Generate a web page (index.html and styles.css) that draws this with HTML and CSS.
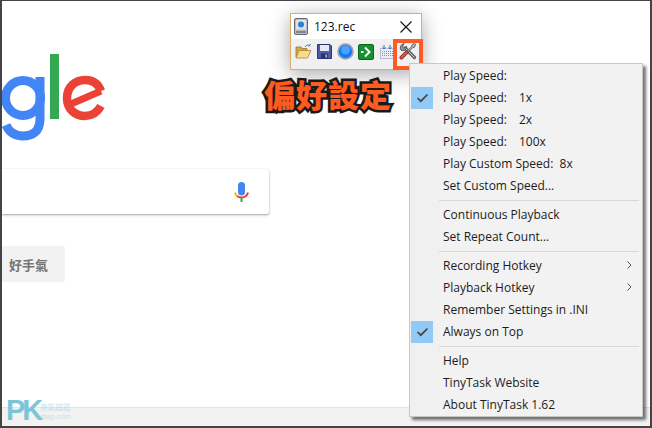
FILE: index.html
```html
<!DOCTYPE html>
<html lang="zh-Hant">
<head>
<meta charset="utf-8">
<title>TinyTask</title>
<link rel="stylesheet" href="styles.css">
</head>
<body>
<div class="screen">
  <main class="page">
    <svg class="logo" width="110" height="90" viewBox="0 0 110 90" fill="none" aria-label="Google">
      <circle cx="23" cy="44" r="17.500" stroke="#4285f4" stroke-width="9"/>
      <path d="M40 23V65C40 78 32 82 23 82C15 82 9 78 6 71" stroke="#4285f4" stroke-width="9"/>
      <rect x="50" y="0" width="9" height="65" fill="#34a853"/>
      <path d="M101 37C98 29 92 26 85 26C75 26 67 33 67 44C67 55 75 62 85 62C92 62 97 59 101 52" stroke="#ea4335" stroke-width="8.500"/>
      <path d="M71 50L101 37" stroke="#ea4335" stroke-width="7"/>
    </svg>
    <div class="search">
      <svg class="mic" width="15" height="20" viewBox="0 0 15 20" fill="none">
        <rect x="4" y="0" width="7" height="13.500" rx="3.500" fill="#4285f4"/>
        <path d="M1 10.500C1.300 12 2 13 3 14" stroke="#fbbc05" stroke-width="2"/>
        <path d="M3 14C5.500 16 9.500 16 12 14C13 13 13.700 12 14 10.500" stroke="#ea4335" stroke-width="2"/>
        <rect x="6.500" y="16" width="2" height="4" fill="#34a853"/>
      </svg>
    </div>
    <div class="lucky">好手氣</div>
    <footer class="page-foot"></footer>
  </main>

  <div class="watermark">
    <span class="wm-pk">PK</span>
    <span class="wm-small"><span>痞凱踏踏</span><span>step.com</span></span>
  </div>

  <section class="tool-window">
    <header class="tool-title">
      <svg width="14" height="17" viewBox="0 0 14 17">
        <rect x="0.500" y="0.500" width="13" height="16" rx="1.500" fill="#b9bfc6" stroke="#667"/>
        <rect x="2" y="2" width="10" height="9.500" fill="#dfe3e8"/>
        <circle cx="7" cy="6.500" r="3" fill="#2f7fd8"/>
        <rect x="2" y="13" width="10" height="2" fill="#80858c"/>
      </svg>
      <span class="tool-name">123.rec</span>
      <svg class="tool-close" width="12" height="12" viewBox="0 0 12 12">
        <path d="M0.500 0.500L11.500 11.500M11.500 0.500L0.500 11.500" stroke="#111" stroke-width="1.100"/>
      </svg>
    </header>
    <div class="tool-icons">
      <svg width="17" height="15" viewBox="0 0 17 15">
        <path d="M1 3H6L7 4.500H12V13H1Z" fill="#d8a742" stroke="#9a7428" stroke-width="0.800"/>
        <path d="M1 14L4 6.500H16L12.500 14Z" fill="#f6dc8c" stroke="#a8842f" stroke-width="0.800"/>
        <path d="M10 3C11 1 13 0.500 15 1.500M15 1.500L15 0M15 1.500L13.500 2.500" stroke="#5a7fb0" fill="none"/>
      </svg>
      <svg width="15" height="15" viewBox="0 0 15 15">
        <path d="M0.500 0.500H13L14.500 2V14.500H0.500Z" fill="#4c5bb0" stroke="#2c3478"/>
        <rect x="3" y="1" width="9" height="6" fill="#e6e8f2"/>
        <rect x="4" y="9.500" width="7" height="5" fill="#2e3560"/>
        <rect x="8.500" y="10.500" width="1.500" height="3" fill="#b8bdd0"/>
      </svg>
      <svg width="17" height="17" viewBox="0 0 17 17">
        <circle cx="8.500" cy="8.500" r="7.400" fill="#1276f2" stroke="#98a2b0" stroke-width="1.800"/>
        <circle cx="8.500" cy="7" r="4.500" fill="#4aa2fb"/>
      </svg>
      <svg class="go" width="16" height="16" viewBox="0 0 16 16">
        <rect x="0.500" y="0.500" width="15" height="15" rx="1.500" fill="#15912f" stroke="#0c6420"/>
        <rect x="3" y="7" width="2.500" height="2" fill="#fff"/>
        <path d="M7 3.500L11.500 8L7 12.500" stroke="#fff" stroke-width="2" fill="none"/>
      </svg>
      <svg class="keys" width="15" height="15" viewBox="0 0 15 15">
        <rect x="0.500" y="4.500" width="14" height="10" fill="#e9edf5" stroke="#7c8aa8" stroke-dasharray="1 1"/>
        <path d="M2 7.500H13M2 9.500H13M2 11.500H13" stroke="#8090b0" stroke-dasharray="1 1"/>
        <path d="M4 1V5M2.500 3.500L4 5L5.500 3.500M10 1V5M8.500 3.500L10 5L11.500 3.500" stroke="#2a6fd0" fill="none"/>
      </svg>
      <svg class="wrench" width="18" height="17" viewBox="0 0 18 17" fill="none">
        <path d="M6 5L15.500 14.500" stroke="#5c5c5c" stroke-width="3.200" stroke-linecap="round"/>
        <path d="M6 5L15.500 14.500" stroke="#cfd2d6" stroke-width="1"/>
        <path d="M5.200 0.600L3.600 3.200L5.200 4.800L7.800 3.400A4 4 0 0 1 2 7.200A4.200 4.200 0 0 1 5.200 0.600Z" fill="#8a8f96" stroke="#4c4c4c" stroke-width="0.800"/>
        <path d="M16.700 1.300L15.400 0.300L12.800 1.900L13 3.200L8.700 7.500L9.800 8.600L14 4.300L15.400 4.400Z" fill="#b6bac0" stroke="#4c4c4c" stroke-width="0.800"/>
        <path d="M7.500 9.500L2.400 14.600" stroke="#7c2a20" stroke-width="3.800" stroke-linecap="round"/>
        <path d="M7.500 9.500L2.400 14.600" stroke="#e2523f" stroke-width="2.200" stroke-linecap="round"/>
      </svg>
    </div>
  </section>
  <div class="tool-highlight"></div>

  <div class="callout">偏好設定</div>

  <nav class="menu">
    <div class="menu-item">Play Speed:</div>
    <div class="menu-item is-checked"><span class="check"><svg width="13" height="10" viewBox="0 0 13 10" fill="none"><path d="M1.500 5L4.800 8.200L11.500 1.500" stroke="#444" stroke-width="1.700"/></svg></span><span class="speed">Play Speed:</span><span>1x</span></div>
    <div class="menu-item"><span class="speed">Play Speed:</span><span>2x</span></div>
    <div class="menu-item"><span class="speed">Play Speed:</span><span>100x</span></div>
    <div class="menu-item">Play Custom Speed:&nbsp; 8x</div>
    <div class="menu-item">Set Custom Speed...</div>
    <div class="menu-sep"></div>
    <div class="menu-item">Continuous Playback</div>
    <div class="menu-item">Set Repeat Count...</div>
    <div class="menu-sep"></div>
    <div class="menu-item has-sub">Recording Hotkey<svg class="chev" width="5" height="8" viewBox="0 0 5 8" fill="none"><path d="M0.500 0.500L4 4L0.500 7.500" stroke="#555"/></svg></div>
    <div class="menu-item has-sub">Playback Hotkey<svg class="chev" width="5" height="8" viewBox="0 0 5 8" fill="none"><path d="M0.500 0.500L4 4L0.500 7.500" stroke="#555"/></svg></div>
    <div class="menu-item">Remember Settings in .INI</div>
    <div class="menu-item is-checked"><span class="check"><svg width="13" height="10" viewBox="0 0 13 10" fill="none"><path d="M1.500 5L4.800 8.200L11.500 1.500" stroke="#444" stroke-width="1.700"/></svg></span>Always on Top</div>
    <div class="menu-sep"></div>
    <div class="menu-item">Help</div>
    <div class="menu-item">TinyTask Website</div>
    <div class="menu-item">About TinyTask 1.62</div>
  </nav>
</div>
</body>
</html>
```

FILE: styles.css
```css
* { box-sizing: border-box; }
html, body { margin: 0; padding: 0; background: #fff; }

.screen {
  position: relative;
  width: 652px;
  height: 428px;
  overflow: hidden;
  background: #fff;
  border: solid #444;
  border-width: 1px 2px 2px 2px;
  font-family: "Open Sans", "Noto Sans CJK TC", sans-serif;
}

.page { display: flex; flex-direction: column; height: 100%; }
.logo { display: block; margin: 53px 0 0 -2px; flex: none; }

.search {
  display: flex;
  align-items: center;
  justify-content: flex-end;
  flex: none;
  width: 267px;
  height: 45px;
  margin-top: 25px;
  padding-right: 20px;
  background: #fff;
  border-radius: 0 2px 2px 0;
  box-shadow: 0 1px 2px rgba(0,0,0,.3), 0 0 1px rgba(0,0,0,.2), 0 2px 4px rgba(0,0,0,.06);
}
.mic { display: block; }

.lucky {
  display: flex;
  align-items: center;
  flex: none;
  width: 63px;
  height: 36px;
  margin-top: 32px;
  padding-left: 7px;
  background: #f2f2f2;
  border-radius: 0 2px 2px 0;
  color: #757575;
  font: 700 13px "Noto Sans CJK TC", sans-serif;
}

.page-foot {
  flex: none;
  height: 19px;
  margin-top: auto;
  background: #f2f2f2;
  border-top: 1px solid #e4e4e4;
}

.watermark {
  position: absolute;
  left: 4px;
  top: 394px;
  display: flex;
  align-items: center;
  color: #7cc5d9;
}
.wm-pk { font: 700 29px/30px "Liberation Sans", sans-serif; letter-spacing: -3px; }
.wm-small {
  display: flex;
  flex-direction: column;
  gap: 1px;
  margin-top: 5px;
  font: 400 7.500px/8px "Liberation Sans", "Noto Sans CJK TC", sans-serif;
  opacity: .4;
}

.tool-window {
  position: absolute;
  left: 288px;
  top: 12px;
  width: 132px;
  height: 57px;
  display: flex;
  flex-direction: column;
  background: #fff;
  border: 1px solid #dcae6a;
  box-shadow: 0 4px 20px rgba(0,0,0,.35);
}
.tool-title {
  display: flex;
  align-items: center;
  height: 25px;
  padding: 0 9px 0 3px;
  flex: none;
}
.tool-name { margin-left: 6px; padding-bottom: 1px; font-size: 12px; color: #111; }
.tool-close { margin-left: auto; }
.tool-icons {
  display: flex;
  align-items: center;
  flex: 1;
  gap: 5px;
  padding: 0 0 5px 4px;
  background: #f0f0f0;
}
.go { margin-left: -1px; }
.keys { margin-left: 1px; }
.wrench { margin-left: -1px; }

.tool-highlight {
  position: absolute;
  left: 391px;
  top: 38px;
  width: 30px;
  height: 31px;
  border: 4px solid #ff5a25;
}

.callout {
  position: absolute;
  left: 262px;
  top: 74px;
  color: #ff5a1f;
  font: 900 31px/38px "Noto Sans CJK TC", sans-serif;
  letter-spacing: 1px;
  -webkit-text-stroke: 5px #1a1a1a;
  paint-order: stroke fill;
}

.menu {
  position: absolute;
  left: 407px;
  top: 62px;
  width: 234px;
  height: 354px;
  padding: 1px;
  background: linear-gradient(to right, #f0f0f0 30px, #f2f2f2 30px);
  border: 1px solid #c8c8c8;
  box-shadow: 3px 3px 3px rgba(0,0,0,.55);
  color: #1c1c1c;
  font-size: 12px;
}
.menu-item {
  position: relative;
  display: flex;
  align-items: center;
  height: 22px;
  padding: 0 0 2px 32px;
  white-space: pre;
}
.speed { width: 76px; }
.check {
  position: absolute;
  left: 0;
  top: 0;
  display: flex;
  align-items: center;
  justify-content: center;
  width: 22px;
  height: 22px;
  background: #91c9f7;
}
.chev { position: absolute; right: 9px; top: 6px; }
.menu-sep {
  height: 7px;
  margin: 0 2px 0 28px;
  background: linear-gradient(#d8d8d8, #d8d8d8) center / 100% 1px no-repeat;
}
```
